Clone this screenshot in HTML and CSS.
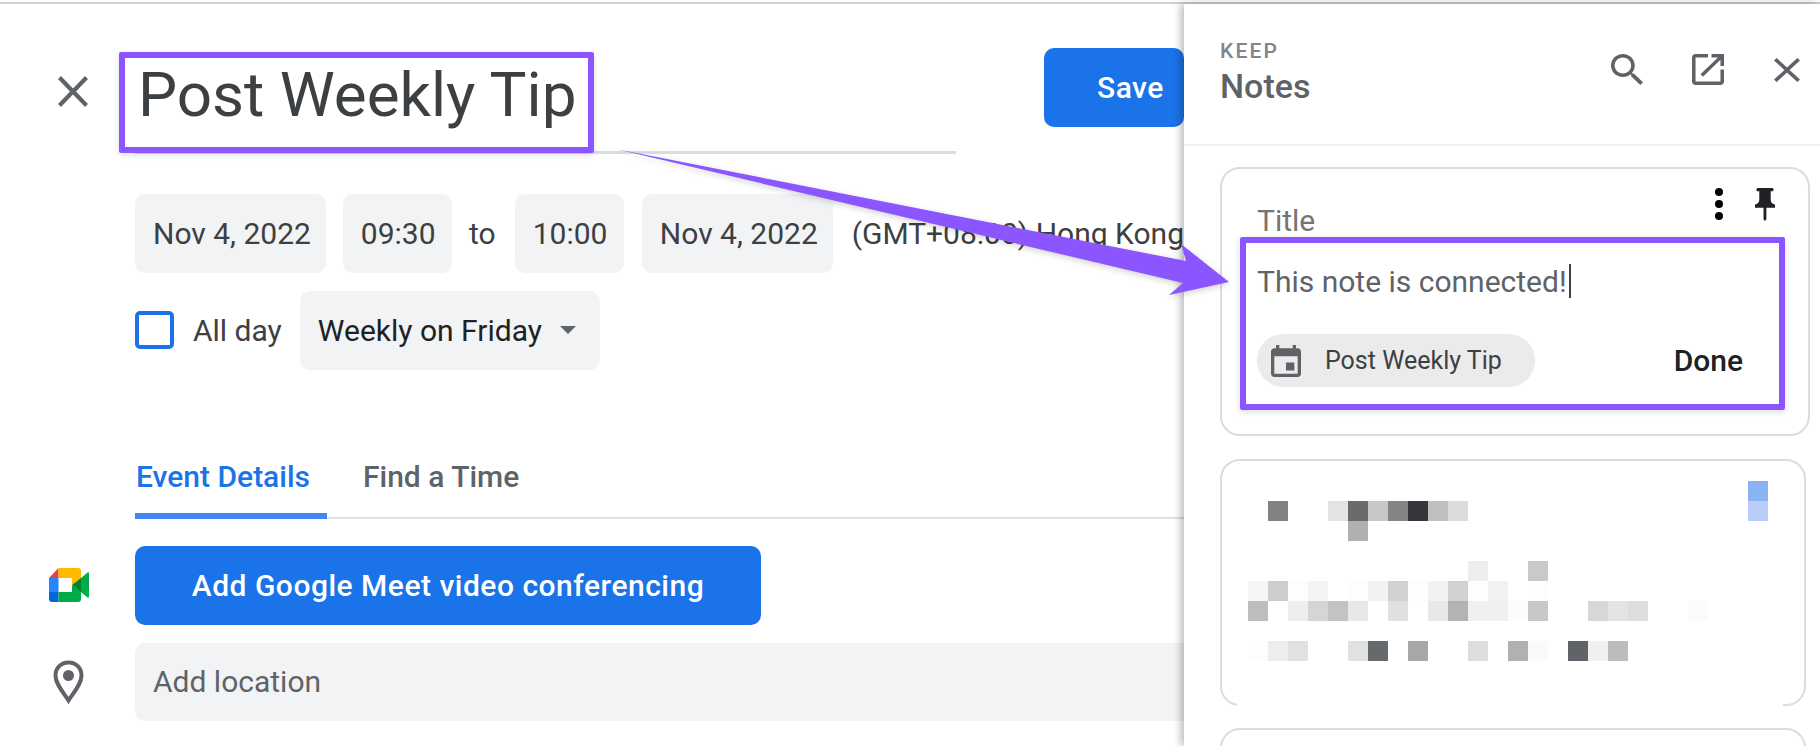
FILE: index.html
```html
<!DOCTYPE html>
<html lang="en">
<head>
  <meta charset="UTF-8">
  <title>Post Weekly Tip</title>
  <link rel="stylesheet" href="styles.css">
</head>
<body>

<div class="top-line"></div>

<div class="page">
  <div class="editor">
    <div class="head">
      <svg class="icon-close" viewBox="5 5 14 14" preserveAspectRatio="none"><path d="M19 6.41L17.59 5 12 10.59 6.41 5 5 6.41 10.59 12 5 17.59 6.41 19 12 13.41 17.59 19 19 17.59 13.41 12z"/></svg>
      <div class="title-field">
        <div class="title-text">Post Weekly Tip</div>
        <div class="mark mark-title"></div>
      </div>
      <button class="save">Save</button>
    </div>

    <div class="when">
      <div class="chip chip-date">Nov 4, 2022</div>
      <div class="chip chip-time">09:30</div>
      <div class="to">to</div>
      <div class="chip chip-time">10:00</div>
      <div class="chip chip-date">Nov 4, 2022</div>
      <div class="zone">(GMT+08:00) Hong Kong</div>
    </div>

    <div class="repeat">
      <div class="checkbox"></div>
      <div class="allday">All day</div>
      <div class="chip chip-repeat">Weekly on Friday<span class="caret"></span></div>
    </div>

    <div class="tabs">
      <div class="tab active">Event Details</div>
      <div class="tab">Find a Time</div>
    </div>

    <div class="row row-meet">
      <svg class="icon-meet" viewBox="0 0 40 34">
        <path fill="#ea4335" d="M9.5 0V10H0z"/>
        <rect fill="#2684fc" x="0" y="10" width="9.5" height="14"/>
        <path fill="#0066da" d="M0 24H9.5V34H3a3 3 0 0 1-3-3z"/>
        <path fill="#ffba00" d="M9.5 0H29a3 3 0 0 1 3 3V10.5L23 17V10H9.5z"/>
        <path fill="#00ac47" d="M9.5 34H29a3 3 0 0 0 3-3V23.5L23 17V24H9.5z"/>
        <path fill="#00832d" d="M23 17L32 10V24z"/>
        <path fill="#00ac47" d="M32 10L38.5 4.5Q40 3.6 40 5.5V28.500Q40 30.400 38.500 29.500L32 24z"/>
      </svg>
      <button class="meet">Add Google Meet video conferencing</button>
    </div>

    <div class="row row-location">
      <svg class="icon-place" viewBox="0 0 31 44">
        <path fill="none" stroke="#5f6368" stroke-width="4" d="M15.500 2.500C8 2.500 2.500 8 2.500 15.500C2.500 24 10 32 15.500 40.500C21 32 28.500 24 28.500 15.500C28.500 8 23 2.500 15.500 2.500z"/>
        <circle fill="#5f6368" cx="15.500" cy="15.500" r="5.500"/>
      </svg>
      <div class="location">Add location</div>
    </div>
  </div>

  <div class="panel">
    <div class="panel-head">
      <div class="panel-name">
        <div class="keep">KEEP</div>
        <div class="notes">Notes</div>
      </div>
      <svg class="icon-search" viewBox="3 3 17.49 17.49" preserveAspectRatio="none"><path d="M15.5 14h-.79l-.28-.27C15.41 12.59 16 11.11 16 9.5 16 5.91 13.09 3 9.5 3S3 5.91 3 9.5 5.91 16 9.5 16c1.61 0 3.09-.59 4.23-1.57l.27.28v.79l5 4.99L20.490 19l-4.99-5zm-6 0C7.010 14 5 11.990 5 9.500S7.010 5 9.500 5 14 7.010 14 9.500 11.990 14 9.500 14z"/></svg>
      <svg class="icon-open" viewBox="3 3 18 18" preserveAspectRatio="none"><path d="M19 19H5V5h7V3H5c-1.110 0-2 .9-2 2v14c0 1.100.89 2 2 2h14c1.100 0 2-.9 2-2v-7h-2v7zM14 3v2h3.590l-9.830 9.830 1.410 1.410L19 6.410V10h2V3h-7z"/></svg>
      <svg class="icon-shut" viewBox="5 5 14 14" preserveAspectRatio="none"><path d="M19 6.41L17.59 5 12 10.59 6.41 5 5 6.41 10.59 12 5 17.59 6.41 19 12 13.41 17.59 19 19 17.59 13.41 12z"/></svg>
    </div>

    <div class="card card-open">
      <div class="note-top">
        <div class="note-title">Title</div>
        <div class="dots"><span></span><span></span><span></span></div>
        <svg class="icon-pin" viewBox="5 2 14 20" preserveAspectRatio="none"><path d="M16 9V4h1c.55 0 1-.45 1-1s-.45-1-1-1H7c-.55 0-1 .45-1 1s.45 1 1 1h1v5c0 1.660-1.340 3-3 3v2h5.970v7l1 1 1-1v-7H19v-2c-1.660 0-3-1.340-3-3z"/></svg>
      </div>
      <div class="note-body">This note is connected!<span class="cursor"></span></div>
      <div class="note-foot">
        <div class="event-chip">
          <svg class="icon-cal" viewBox="3 1 18 20" preserveAspectRatio="none"><path d="M17 12h-5v5h5v-5zM16 1v2H8V1H6v2H5c-1.110 0-1.990.9-1.990 2L3 19c0 1.100.89 2 2 2h14c1.100 0 2-.9 2-2V5c0-1.100-.9-2-2-2h-1V1h-2zm3 18H5V8h14v11z"/></svg>
          <span>Post Weekly Tip</span>
        </div>
        <div class="done">Done</div>
      </div>
      <div class="mark mark-note"></div>
    </div>

    <div class="card card-blur">
      <svg class="mosaic" viewBox="0 0 520 180" width="520" height="180">
        <rect x="500" y="0" width="20" height="20" fill="#8ab3f2"/>
        <rect x="500" y="20" width="20" height="20" fill="#b9cdf8"/>

        <rect x="20" y="20" width="20" height="20" fill="#828282"/>
        <rect x="80" y="20" width="20" height="20" fill="#e3e3e3"/>
        <rect x="100" y="20" width="20" height="20" fill="#6b6b6c"/>
        <rect x="120" y="20" width="20" height="20" fill="#c8c8c8"/>
        <rect x="140" y="20" width="20" height="20" fill="#848484"/>
        <rect x="160" y="20" width="20" height="20" fill="#34363a"/>
        <rect x="180" y="20" width="20" height="20" fill="#bebfc1"/>
        <rect x="200" y="20" width="20" height="20" fill="#dcdcdc"/>
        <rect x="100" y="40" width="20" height="20" fill="#b0b0b0"/>

        <rect x="220" y="80" width="20" height="20" fill="#ededed"/>
        <rect x="280" y="80" width="20" height="20" fill="#c8c9ca"/>

        <rect x="0" y="100" width="20" height="20" fill="#f6f6f6"/>
        <rect x="20" y="100" width="20" height="20" fill="#cecece"/>
        <rect x="40" y="100" width="20" height="20" fill="#fdfdfd"/>
        <rect x="60" y="100" width="20" height="20" fill="#f4f4f4"/>
        <rect x="100" y="100" width="20" height="20" fill="#fdfdfd"/>
        <rect x="120" y="100" width="20" height="20" fill="#f2f2f2"/>
        <rect x="140" y="100" width="20" height="20" fill="#d1d2d4"/>
        <rect x="160" y="100" width="20" height="20" fill="#fdfdfd"/>
        <rect x="180" y="100" width="20" height="20" fill="#f2f2f2"/>
        <rect x="200" y="100" width="20" height="20" fill="#d0d1d3"/>
        <rect x="220" y="100" width="20" height="20" fill="#fdfdfd"/>
        <rect x="240" y="100" width="20" height="20" fill="#f2f2f2"/>
        <rect x="280" y="100" width="20" height="20" fill="#fdfdfd"/>

        <rect x="0" y="120" width="20" height="20" fill="#bcbdbf"/>
        <rect x="40" y="120" width="20" height="20" fill="#eeeeee"/>
        <rect x="60" y="120" width="20" height="20" fill="#d4d6d5"/>
        <rect x="80" y="120" width="20" height="20" fill="#c2c3c5"/>
        <rect x="100" y="120" width="20" height="20" fill="#e8e8e8"/>
        <rect x="140" y="120" width="20" height="20" fill="#dfe0e2"/>
        <rect x="180" y="120" width="20" height="20" fill="#e7e9e8"/>
        <rect x="200" y="120" width="20" height="20" fill="#b2b3b5"/>
        <rect x="220" y="120" width="20" height="20" fill="#f0f0f0"/>
        <rect x="240" y="120" width="20" height="20" fill="#f0f0f0"/>
        <rect x="260" y="120" width="20" height="20" fill="#fcfcfc"/>
        <rect x="280" y="120" width="20" height="20" fill="#c7c8ca"/>
        <rect x="340" y="120" width="20" height="20" fill="#d7d7d7"/>
        <rect x="360" y="120" width="20" height="20" fill="#e4e4e4"/>
        <rect x="380" y="120" width="20" height="20" fill="#dddddd"/>
        <rect x="440" y="120" width="20" height="20" fill="#fbfbfb"/>

        <rect x="0" y="160" width="20" height="20" fill="#fdfdfd"/>
        <rect x="20" y="160" width="20" height="20" fill="#eceeed"/>
        <rect x="40" y="160" width="20" height="20" fill="#e0e1e3"/>
        <rect x="100" y="160" width="20" height="20" fill="#e0e2e1"/>
        <rect x="120" y="160" width="20" height="20" fill="#666a6d"/>
        <rect x="160" y="160" width="20" height="20" fill="#a6a7a9"/>
        <rect x="220" y="160" width="20" height="20" fill="#dcdedd"/>
        <rect x="260" y="160" width="20" height="20" fill="#b0b1b3"/>
        <rect x="280" y="160" width="20" height="20" fill="#fafafa"/>
        <rect x="320" y="160" width="20" height="20" fill="#606367"/>
        <rect x="340" y="160" width="20" height="20" fill="#f0f0f0"/>
        <rect x="360" y="160" width="20" height="20" fill="#bbbcbe"/>
      </svg>
    </div>

    <div class="card card-next"></div>
  </div>
</div>

<!-- annotation arrow drawn over both columns -->
<svg class="arrow" viewBox="0 0 1820 746" width="1820" height="746">
  <polygon points="616,149 1186,261 1181,244 1229,282 1169,295 1183,283"/>
</svg>

</body>
</html>
```

FILE: styles.css
```css
* {
  box-sizing: border-box;
}

body {
  margin: 0;
  height: 746px;
  overflow: hidden;
  background: #fff;
  font-family: Roboto, "Liberation Sans", sans-serif;
  color: #3c4043;
  position: relative;
}

button {
  border: none;
  font-family: inherit;
  color: #fff;
  background: #1a73e8;
  border-radius: 10px;
}

svg {
  display: block;
  flex: none;
}

.top-line {
  height: 2px;
  margin-top: 2px;
  background: #cfcfcf;
}

.page {
  display: flex;
  height: 742px;
}

/* left side, the event form */
.editor {
  width: 1184px;
  flex: none;
}

.head {
  display: flex;
  padding: 44px 0 0 58px;
}

.icon-close {
  width: 30px;
  height: 31px;
  margin-top: 28px;
  fill: #5f6368;
}

.title-field {
  position: relative;
  width: 821px;
  height: 105.500px;
  margin-left: 47px;
  border-bottom: 3px solid #dadce0;
}

.title-text {
  padding: 9px 0 0 3px;
  font-size: 62px;
  line-height: 76px;
  color: #3c4043;
}

.mark {
  position: absolute;
  border: 6px solid #8b56ff;
  border-radius: 2px;
  box-shadow: 0 2px 6px rgba(0, 0, 0, 0.14);
}

.mark-title {
  left: -16px;
  top: 4px;
  width: 475px;
  height: 101px;
}

.save {
  width: 140px;
  height: 79px;
  margin-left: 88px;
  padding: 0 0 0 53px;
  text-align: left;
  font-size: 30px;
  font-weight: 500;
  letter-spacing: 0.5px;
}

.when,
.repeat {
  display: flex;
  align-items: center;
  padding-left: 135px;
  white-space: nowrap;
  font-size: 30px;
}

.when {
  margin-top: 40px;
}

.repeat {
  margin-top: 18px;
}

.chip {
  height: 79px;
  line-height: 79px;
  background: #f1f3f4;
  border-radius: 10px;
}

.chip-date {
  width: 198px;
  padding-left: 18px;
}

.chip-time {
  width: 113px;
  padding-left: 18px;
  margin-left: 17px;
}

.chip-date + .chip-time {
  margin-left: 17px;
}

.chip-time + .chip-date {
  margin-left: 18px;
}

.to {
  margin: 0 2px 0 17px;
}

.zone {
  margin-left: 19px;
}

.checkbox {
  width: 39px;
  height: 38px;
  border: 4px solid #1a73e8;
  border-radius: 5px;
}

.allday {
  margin-left: 19px;
}

.chip-repeat {
  display: flex;
  align-items: center;
  width: 300px;
  margin-left: 18px;
  padding-left: 18px;
  color: #202124;
}

.caret {
  margin-left: 18px;
  border-left: 8.500px solid transparent;
  border-right: 8.500px solid transparent;
  border-top: 8.500px solid #5f6368;
}

.tabs {
  display: flex;
  margin: 72px 0 0 135px;
  height: 77px;
  border-bottom: 2px solid #e0e0e0;
  font-size: 30px;
  font-weight: 500;
  color: #5f6368;
}

.tab {
  height: 77px;
  padding-top: 17px;
  line-height: 36px;
}

.tab.active {
  width: 192px;
  margin-right: 36px;
  padding-left: 1px;
  color: #1a73e8;
  border-bottom: 6px solid #4285f4;
  border-radius: 0 0 0 0;
}

.row {
  display: flex;
  align-items: center;
}

.row-meet {
  margin-top: 27px;
  padding-left: 49px;
}

.icon-meet {
  width: 40px;
  height: 34px;
  margin-right: 46px;
}

.meet {
  width: 626px;
  height: 79px;
  font-size: 30px;
  font-weight: 500;
  letter-spacing: 0.5px;
}

.row-location {
  margin-top: 18px;
  padding-left: 53px;
}

.icon-place {
  width: 31px;
  height: 44px;
  margin-right: 51px;
}

.location {
  flex: 1;
  height: 78px;
  line-height: 78px;
  padding-left: 18px;
  background: #f1f3f4;
  border-radius: 10px 0 0 10px;
  font-size: 30px;
  color: #5f6368;
}

/* right side, the keep panel */
.panel {
  flex: 1;
  position: relative;
  background: #fff;
  box-shadow: -3px 0 8px rgba(0, 0, 0, 0.28);
}

.panel-head {
  display: flex;
  align-items: center;
  height: 142px;
  padding-left: 36px;
  border-bottom: 2px solid #f1f3f4;
}

.panel-name {
  width: 391px;
  margin-top: -3px;
}

.keep {
  font-size: 21px;
  font-weight: 500;
  line-height: 25px;
  letter-spacing: 2.200px;
  color: #80868b;
}

.notes {
  font-size: 34px;
  font-weight: 500;
  line-height: 40px;
  margin-top: 2px;
  color: #5f6368;
}

.icon-search,
.icon-open {
  width: 32px;
  height: 31px;
  margin-top: -10px;
  fill: #5f6368;
}

.icon-open {
  margin-left: 49px;
}

.icon-shut {
  width: 26px;
  height: 24px;
  margin: -8px 0 0 50px;
  fill: #5f6368;
}

.card {
  position: relative;
  margin-left: 36px;
  border: 2px solid #dadce0;
  border-radius: 20px;
}

.card-open {
  width: 590px;
  height: 269px;
  margin-top: 21px;
}

.note-top {
  display: flex;
  height: 70px;
  padding: 19px 33px 0 35px;
}

.note-title {
  flex: 1;
  align-self: flex-end;
  font-size: 30px;
  line-height: 36px;
  color: #757575;
}

.dots {
  display: flex;
  flex-direction: column;
  justify-content: space-between;
  width: 8px;
  height: 32px;
  margin-right: 32px;
}

.dots span {
  width: 8px;
  height: 8px;
  border-radius: 50%;
  background: #000;
}

.icon-pin {
  width: 20px;
  height: 33px;
  fill: #202124;
}

.note-body {
  display: flex;
  margin-top: 25px;
  padding-left: 35px;
  font-size: 30px;
  line-height: 36px;
  color: #5f6368;
}

.cursor {
  width: 2px;
  height: 34px;
  margin-left: 2px;
  background: #3c4043;
}

.note-foot {
  display: flex;
  align-items: center;
  justify-content: space-between;
  margin-top: 34px;
  padding: 0 65px 0 35px;
}

.event-chip {
  display: flex;
  align-items: center;
  width: 278px;
  height: 53px;
  padding-left: 14px;
  border-radius: 27px;
  background: #ebebeb;
  font-size: 25px;
  color: #3c4043;
}

.icon-cal {
  width: 30px;
  height: 32px;
  margin-right: 24px;
  fill: #5f6368;
}

.done {
  font-size: 30px;
  font-weight: 500;
  color: #202124;
}

.mark-note {
  left: 18px;
  top: 68px;
  width: 545px;
  height: 173px;
}

.card-blur {
  width: 586px;
  height: 247px;
  margin-top: 23px;
  padding: 20px 0 0 26px;
}

/* the blur box hides the lower edge of the card */
.card-blur::after {
  content: "";
  position: absolute;
  left: 15px;
  right: 21px;
  bottom: -2px;
  height: 2px;
  background: #fff;
}

.card-next {
  width: 586px;
  height: 60px;
  margin-top: 22px;
}

.arrow {
  position: absolute;
  left: 0;
  top: 0;
  fill: #8b56ff;
  filter: drop-shadow(0 2px 3px rgba(0, 0, 0, 0.18));
}
```
